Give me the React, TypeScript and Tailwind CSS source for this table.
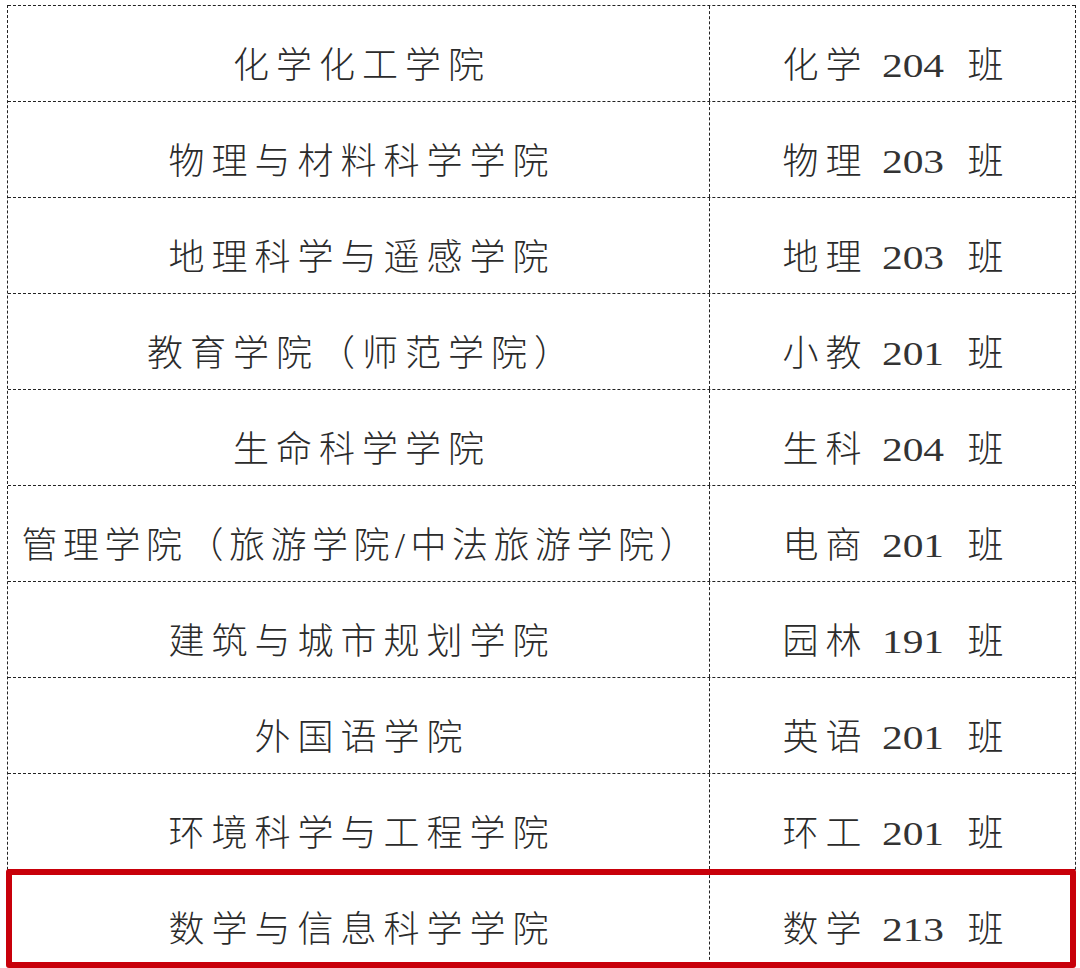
import React from "react";

const rows: [string, string, string][] = [
  ["化学化工学院", "化学", "204"],
  ["物理与材料科学学院", "物理", "203"],
  ["地理科学与遥感学院", "地理", "203"],
  ["教育学院（师范学院）", "小教", "201"],
  ["生命科学学院", "生科", "204"],
  ["管理学院（旅游学院/中法旅游学院）", "电商", "201"],
  ["建筑与城市规划学院", "园林", "191"],
  ["外国语学院", "英语", "201"],
  ["环境科学与工程学院", "环工", "201"],
  ["数学与信息科学学院", "数学", "213"],
];

export default function App() {
  return (
    <div
      className="w-[1080px] h-[968px] bg-white pl-[7px] pt-[5px] overflow-hidden text-[#2b2b2b]"
      style={{ fontFamily: '"Liberation Serif", "Noto Sans CJK SC", sans-serif' }}
    >
      <div className="w-[1069px] border-l border-r border-dashed border-[#222]">
        {rows.map(([a, b, n], i) => {
          const last = i === rows.length - 1;
          const tight = a.length > 12;
          return (
            <div
              key={i}
              className="relative grid grid-cols-[702px_366px] h-[96px] border-t border-dashed border-[#222]"
            >
              <div
                className={
                  tight
                    ? "flex items-center justify-center pt-[24px] border-r border-dashed border-[#222] text-[36px] leading-none tracking-[5.5px] font-light whitespace-nowrap"
                    : "flex items-center justify-center pt-[24px] border-r border-dashed border-[#222] text-[36px] leading-none tracking-[7px] font-light whitespace-nowrap"
                }
              >
                <span className={tight ? "mr-[-5.5px]" : "mr-[-7px]"}>{a}</span>
              </div>
              <div className="flex items-center justify-center pt-[24px] text-[36px] leading-none font-light whitespace-nowrap">
                <span className="tracking-[7px] mr-[-7px]">{b}</span>
                <span className="inline-block w-[62px] ml-[20px] mr-[24px] text-center text-[34px] leading-none scale-x-[1.22] text-[#333]">
                  {n}
                </span>
                <span>班</span>
              </div>
              {last && (
                <div className="absolute left-[-2px] right-[-1px] top-[-1px] bottom-[-3px] border-[6px] border-[#c8000a] rounded-[3px]" />
              )}
            </div>
          );
        })}
      </div>
    </div>
  );
}
